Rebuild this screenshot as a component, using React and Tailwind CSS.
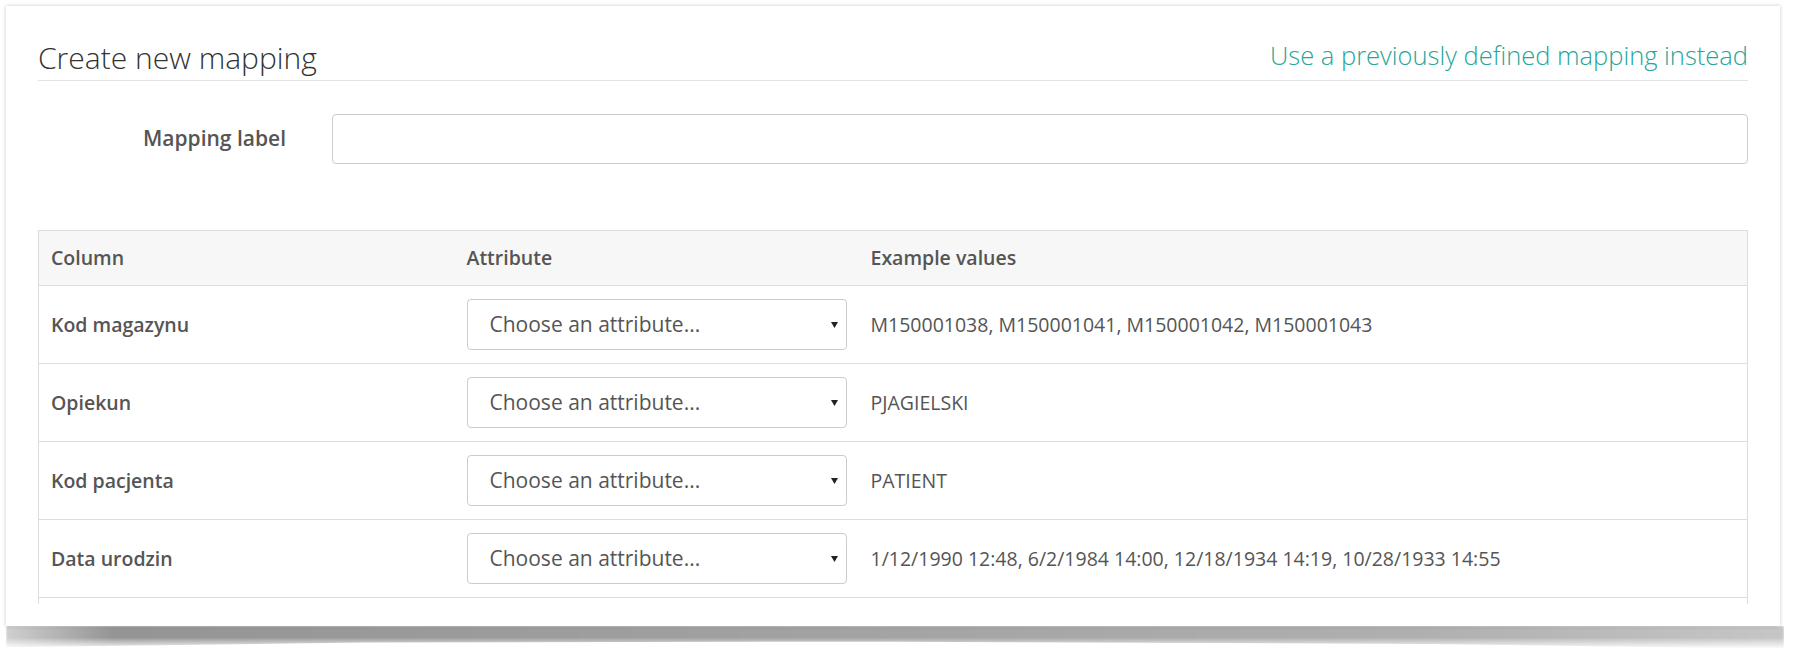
import React from "react";

const rows = [
  ["Kod magazynu", "M150001038, M150001041, M150001042, M150001043"],
  ["Opiekun", "PJAGIELSKI"],
  ["Kod pacjenta", "PATIENT"],
  ["Data urodzin", "1/12/1990 12:48, 6/2/1984 14:00, 12/18/1934 14:19, 10/28/1933 14:55"],
  ["", ""],
];

function SelectBox() {
  return (
    <div className="relative flex h-[51px] w-[380px] items-center rounded-[4px] border border-[#cccccc] bg-white pl-[22px] text-[21px] text-[#555]">
      <span>Choose an attribute...</span>
      <svg className="absolute right-[8px] top-1/2 -translate-y-1/2" width="7" height="6" viewBox="0 0 7 6">
        <path d="M0 0 L7 0 L3.5 6 Z" fill="#222" />
      </svg>
    </div>
  );
}

export default function App() {
  return (
    <div className="h-[654px] w-[1793px] overflow-hidden bg-white font-['Open_Sans',sans-serif] text-[#555]">
      <div className="pl-[6px] pt-[6px]">
        <div className="relative w-[1774px]">
          <div className="absolute left-[0px] right-[-4px] top-full h-[23px] bg-[linear-gradient(to_right,#d0d0d0,#959595_6%,#a2a2a2_45%,#b0b0b0_80%,#c6c6c6)] [clip-path:polygon(0_0,100%_0,100%_100%,80%_78%,50%_68%,20%_72%,0_92%)] [mask-image:linear-gradient(to_bottom,black,black_50%,transparent)] blur-[1px]" />
          <div className="relative bg-white px-[32px] pb-[22px] pt-[32px] shadow-[0_0_4px_rgba(0,0,0,0.22)]">
            <div className="flex items-end justify-between border-b border-[#e3e3e3] pb-[2px]">
              <h2 className="text-[30px] font-light leading-[40px] text-[#333]">Create new mapping</h2>
              <a className="mb-[6px] text-[25.5px] font-light leading-[34px] text-[#26a69a]">
                Use a previously defined mapping instead
              </a>
            </div>

            <div className="mt-[33px] flex items-center">
              <label className="w-[248px] text-right text-[21px] font-semibold text-[#555]">Mapping label</label>
              <div className="ml-[46px] h-[50px] flex-1 rounded-[4px] border border-[#cccccc] bg-white" />
            </div>

            <div className="mt-[66px] h-[374px] overflow-hidden">
              <table className="w-full border-collapse border border-[#dddddd] text-[19.5px]">
                <thead>
                  <tr className="h-[55px] bg-[#f7f7f7]">
                    <th className="w-[416px] border-b border-[#dddddd] px-[12px] text-left font-semibold">Column</th>
                    <th className="w-[402px] border-b border-[#dddddd] px-[12px] text-left font-semibold">Attribute</th>
                    <th className="border-b border-[#dddddd] px-[12px] text-left font-semibold">Example values</th>
                  </tr>
                </thead>
                <tbody>
                  {rows.map(([label, ex], i) => (
                    <tr key={i} className="h-[78px] border-b border-[#dddddd]">
                      <td className="px-[12px] font-semibold">{label}</td>
                      <td className="px-[12px]">{label ? <SelectBox /> : null}</td>
                      <td className="px-[12px]">{ex}</td>
                    </tr>
                  ))}
                </tbody>
              </table>
            </div>
          </div>
        </div>
      </div>
    </div>
  );
}
